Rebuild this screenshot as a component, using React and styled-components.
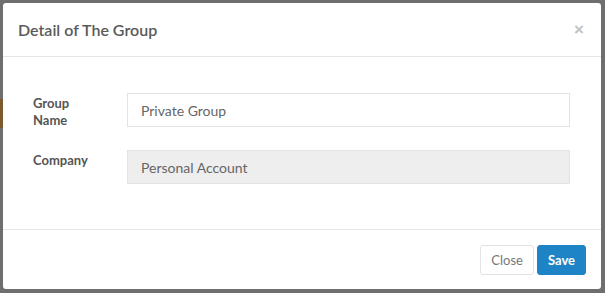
import React from 'react';
import styled, { createGlobalStyle } from 'styled-components';

const GlobalStyle = createGlobalStyle`
  html, body {
    margin: 0;
    padding: 0;
    background: #6e6e6e;
    font-family: Lato, "Noto Sans", Arial, sans-serif;
  }
`;

const Backdrop = styled.div`
  width: 605px;
  height: 293px;
  box-sizing: border-box;
  padding: 3px 4px 4px 3px;
  background: linear-gradient(#7c5a2e, #7c5a2e) 0 99px / 3px 29px no-repeat,
    #6e6e6e;
`;

const Modal = styled.div`
  width: 598px;
  height: 286px;
  background: #ffffff;
  border-radius: 3px;
  display: flex;
  flex-direction: column;
  overflow: hidden;
`;

const Header = styled.div`
  height: 54px;
  box-sizing: border-box;
  padding: 0 17px 0 15px;
  border-bottom: 1px solid #e5e5e5;
  display: flex;
  align-items: center;
  justify-content: space-between;
`;

const Title = styled.h4`
  margin: 0;
  font-size: 16px;
  font-weight: 600;
  color: #5a5a5a;
`;

const CloseX = styled.span`
  font-size: 17px;
  line-height: 1;
  color: #c2c2c2;
  font-weight: 700;
  font-family: "Liberation Sans", Arial, sans-serif;
`;

const Body = styled.div`
  flex: 1;
  padding: 36px 31px 0 30px;
  display: flex;
  flex-direction: column;
  gap: 21px;
`;

const Row = styled.div`
  display: flex;
  align-items: flex-start;
`;

const Label = styled.label`
  width: 94px;
  padding-top: 2px;
  font-size: 13px;
  line-height: 17px;
  font-weight: 700;
  color: #555555;
`;

const Input = styled.div`
  flex: 1;
  height: 34px;
  box-sizing: border-box;
  border: 1px solid #e3e3e3;
  background: ${(p) => (p.disabled ? '#eeeeee' : '#ffffff')};
  padding: 0 13px;
  display: flex;
  align-items: center;
  font-size: 14px;
  color: #666666;
`;

const Footer = styled.div`
  height: 60px;
  box-sizing: border-box;
  border-top: 1px solid #e5e5e5;
  padding: 0 15px 0 0;
  display: flex;
  align-items: center;
  justify-content: flex-end;
  gap: 3px;
`;

const Button = styled.button`
  height: 30px;
  box-sizing: border-box;
  padding: 0 10px;
  border-radius: 3px;
  font-family: inherit;
  font-size: 13px;
  border: 1px solid ${(p) => (p.primary ? '#1e84c6' : '#e3e3e3')};
  background: ${(p) => (p.primary ? '#1e84c6' : '#ffffff')};
  color: ${(p) => (p.primary ? '#ffffff' : '#777777')};
  font-weight: ${(p) => (p.primary ? 700 : 400)};
  margin-top: 1px;
`;

const App = () => {
  return (
    <>
      <GlobalStyle />
      <Backdrop>
        <Modal>
          <Header>
            <Title>Detail of The Group</Title>
            <CloseX>×</CloseX>
          </Header>
          <Body>
            <Row>
              <Label>Group<br />Name</Label>
              <Input>Private Group</Input>
            </Row>
            <Row>
              <Label>Company</Label>
              <Input disabled>Personal Account</Input>
            </Row>
          </Body>
          <Footer>
            <Button>Close</Button>
            <Button primary>Save</Button>
          </Footer>
        </Modal>
      </Backdrop>
    </>
  );
};

export default App;
